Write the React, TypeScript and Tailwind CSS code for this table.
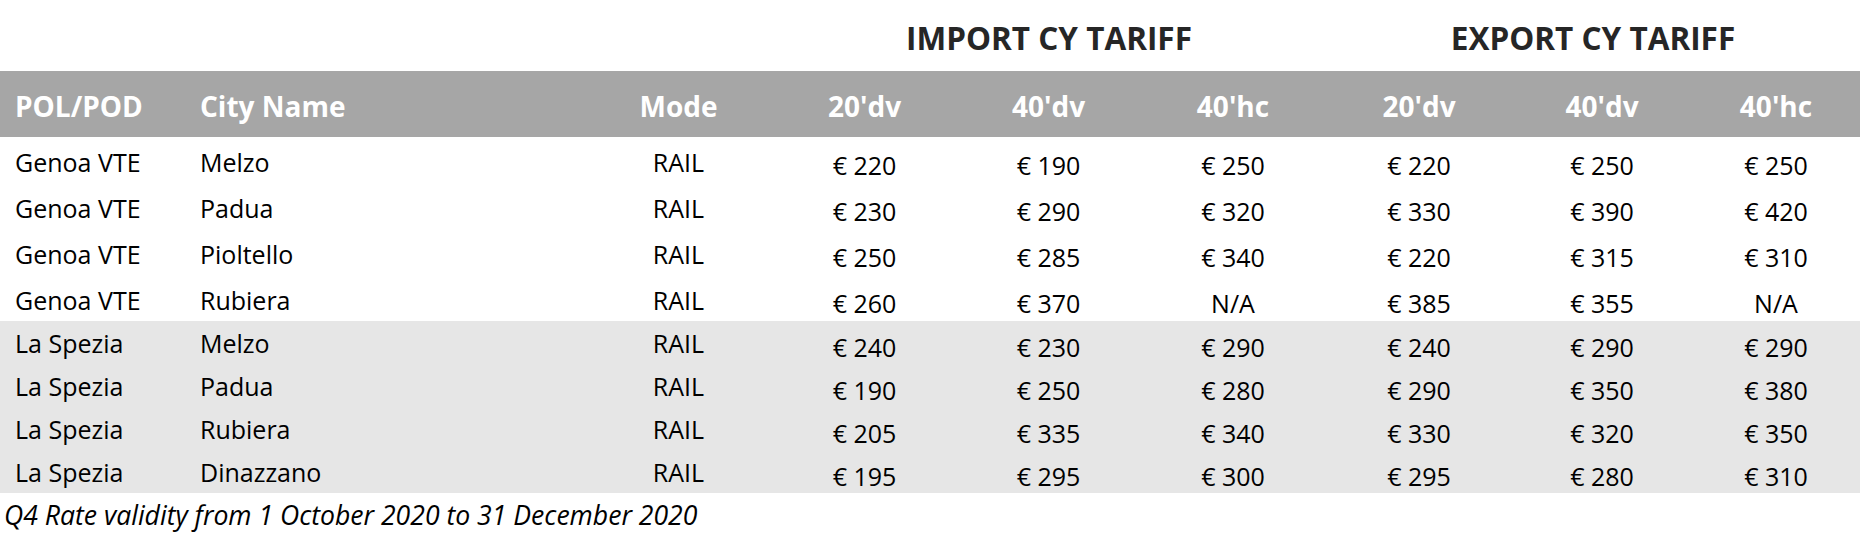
import React from "react";

const cols =
  "grid grid-cols-[190px_395px_187px_185px_183px_186px_186px_180px_168px]";

type Row = [string, string, string, string, string, string, string, string, string];

const rows: Row[] = [
  ["Genoa VTE", "Melzo", "RAIL", "€ 220", "€ 190", "€ 250", "€ 220", "€ 250", "€ 250"],
  ["Genoa VTE", "Padua", "RAIL", "€ 230", "€ 290", "€ 320", "€ 330", "€ 390", "€ 420"],
  ["Genoa VTE", "Pioltello", "RAIL", "€ 250", "€ 285", "€ 340", "€ 220", "€ 315", "€ 310"],
  ["Genoa VTE", "Rubiera", "RAIL", "€ 260", "€ 370", "N/A", "€ 385", "€ 355", "N/A"],
  ["La Spezia", "Melzo", "RAIL", "€ 240", "€ 230", "€ 290", "€ 240", "€ 290", "€ 290"],
  ["La Spezia", "Padua", "RAIL", "€ 190", "€ 250", "€ 280", "€ 290", "€ 350", "€ 380"],
  ["La Spezia", "Rubiera", "RAIL", "€ 205", "€ 335", "€ 340", "€ 330", "€ 320", "€ 350"],
  ["La Spezia", "Dinazzano", "RAIL", "€ 195", "€ 295", "€ 300", "€ 295", "€ 280", "€ 310"],
];

const headers = ["20'dv", "40'dv", "40'hc", "20'dv", "40'dv", "40'hc"];

function DataRow({ r, gray }: { r: Row; gray: boolean }) {
  const textPad = gray ? "pt-0" : "pt-[3px]";
  const numPad = gray ? "pt-[8px]" : "pt-[10px]";
  return (
    <div
      className={`${cols} ${gray ? "h-[43px] bg-[#e6e6e6]" : "h-[46px] bg-white"} text-[25px] text-black`}
    >
      <div className={`flex items-center pl-[15px] whitespace-nowrap ${textPad}`}>{r[0]}</div>
      <div className={`flex items-center pl-[10px] whitespace-nowrap ${textPad}`}>{r[1]}</div>
      <div className={`flex items-center justify-center whitespace-nowrap ${textPad}`}>{r[2]}</div>
      {r.slice(3).map((v, i) => (
        <div key={i} className={`flex items-center justify-center whitespace-nowrap ${numPad}`}>
          {v}
        </div>
      ))}
    </div>
  );
}

export default function App() {
  return (
    <div
      className="w-[1860px] h-[552px] bg-white overflow-hidden"
      style={{ fontFamily: "'Open Sans', 'Noto Sans', sans-serif" }}
    >
      <div className={`${cols} h-[71px]`}>
        <div className="col-span-3" />
        <div className="col-span-3 flex items-center justify-center pt-[4px] text-[31.5px] font-bold text-[#262626]">
          IMPORT CY TARIFF
        </div>
        <div className="col-span-3 flex items-center justify-center pt-[4px] text-[31.5px] font-bold text-[#262626]">
          EXPORT CY TARIFF
        </div>
      </div>
      <div className={`${cols} h-[66px] bg-[#a6a6a6] text-white text-[28px] font-bold`}>
        <div className="flex items-center pl-[15px] pt-[4px] whitespace-nowrap">POL/POD</div>
        <div className="flex items-center pl-[10px] pt-[4px] whitespace-nowrap">City Name</div>
        <div className="flex items-center justify-center pt-[4px]">Mode</div>
        {headers.map((h, i) => (
          <div key={i} className="flex items-center justify-center pt-[4px]">
            {h}
          </div>
        ))}
      </div>
      {rows.map((r, i) => (
        <DataRow key={i} r={r} gray={i >= 4} />
      ))}
      <div className="pl-[4px] pt-[2px] text-[26.6px] italic text-black whitespace-nowrap leading-[40px]">
        Q4 Rate validity from 1 October 2020 to 31 December 2020
      </div>
    </div>
  );
}
